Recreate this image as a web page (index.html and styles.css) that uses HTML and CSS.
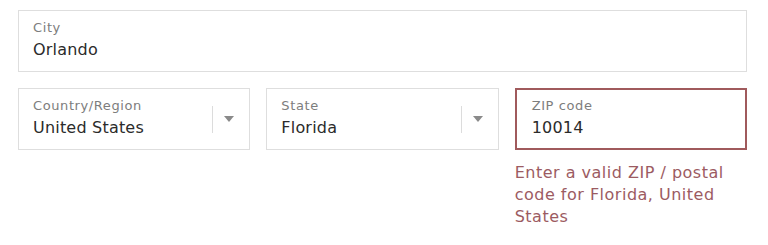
FILE: index.html
```html
<!DOCTYPE html>
<html lang="en">
<head>
<meta charset="utf-8">
<title>Address</title>
<link rel="stylesheet" href="styles.css">
</head>
<body>
<form class="address">
  <div class="field field-city">
    <span class="label">City</span>
    <span class="value">Orlando</span>
  </div>
  <div class="row">
    <div class="field select">
      <div class="select-text">
        <span class="label">Country/Region</span>
        <span class="value">United States</span>
      </div>
      <span class="divider"></span>
      <span class="arrow"></span>
    </div>
    <div class="field select">
      <div class="select-text">
        <span class="label">State</span>
        <span class="value">Florida</span>
      </div>
      <span class="divider"></span>
      <span class="arrow"></span>
    </div>
    <div class="zip">
      <div class="field field-error">
        <span class="label">ZIP code</span>
        <span class="value">10014</span>
      </div>
      <p class="error">Enter a valid ZIP / postal code for Florida, United States</p>
    </div>
  </div>
</form>
</body>
</html>
```
FILE: styles.css
```css
html, body {
  margin: 0;
  background: #ffffff;
}
body {
  font-family: "DejaVu Sans", "Noto Sans", "Liberation Sans", sans-serif;
  padding: 10px 21px 0 18px;
}
.address {
  display: flex;
  flex-direction: column;
  gap: 16px;
}
.row {
  display: grid;
  grid-template-columns: 1fr 1fr 1fr;
  gap: 16px;
  align-items: start;
}
.field {
  box-sizing: border-box;
  height: 62px;
  border: 1px solid #dedede;
  padding: 8px 14px 0 14px;
  display: flex;
  flex-direction: column;
}
.label {
  font-size: 13px;
  line-height: 18px;
  color: #7d7d7d;
  letter-spacing: 0.6px;
}
.value {
  font-size: 16px;
  line-height: 24px;
  margin-top: 1px;
  color: #2b2b2b;
  letter-spacing: 0.2px;
}
.select {
  flex-direction: row;
  align-items: center;
  padding-top: 0;
  padding-right: 0;
}
.select-text {
  flex: 1;
  display: flex;
  flex-direction: column;
  padding-top: 8px;
  align-self: flex-start;
}
.divider {
  width: 1px;
  height: 27px;
  background: #dcdcdc;
}
.arrow {
  width: 0;
  height: 0;
  border-left: 5.5px solid transparent;
  border-right: 5.5px solid transparent;
  border-top: 6px solid #8a8a8a;
  margin: 0 15px 0 11px;
}
.field-error {
  border: 2px solid #a05a5c;
  padding: 7px 15px 0 15px;
}
.error {
  margin: 12px 0 0 0;
  font-size: 16px;
  line-height: 22px;
  color: #9c5b62;
  letter-spacing: 0.5px;
}
```
